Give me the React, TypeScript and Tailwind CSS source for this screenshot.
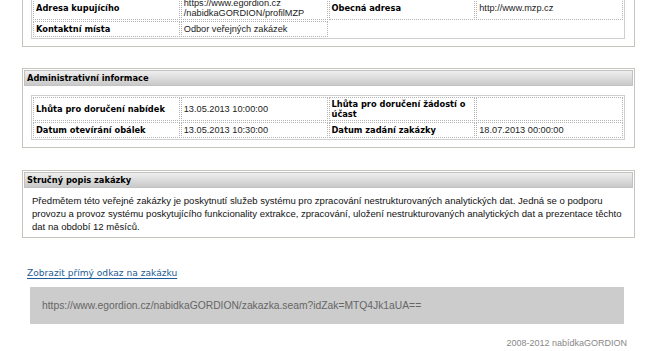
import React from "react";

const lbl = "font-['DejaVu_Sans_Condensed','DejaVu_Sans',sans-serif] font-bold text-[9.2px] text-black";
const val = "font-['Liberation_Sans',Arial,sans-serif] text-[9.2px] text-[#222]";
const td = "border border-dotted border-[#b4b4b4] px-[2px] py-[1px] h-[16px] leading-[10px] align-middle w-1/4";

function Header({ title }: { title: string }) {
  return (
    <div className="h-[16px] border border-[#c2c2c2] bg-gradient-to-b from-[#efefef] to-[#c9c9c9] pl-[2px] flex items-center">
      <span className={lbl + " leading-none"}>{title}</span>
    </div>
  );
}

export default function App() {
  return (
    <div className="w-[648px] h-[351px] overflow-hidden bg-white">
      <div className="ml-[22px] w-[613px]">
        {/* top panel (cut off) */}
        <div className="mt-[-15px] border border-[#c7c4bd] pt-[8px] pb-[7px]">
          <table className="ml-[8px] w-[594px] table-fixed border-separate border-spacing-[1px] border border-[#cfcfcf]">
            <tbody>
              <tr>
                <td className={td + " " + lbl}>Adresa kupujícího</td>
                <td className={td + " " + val}>
                  https://www.egordion.cz
                  <br />
                  /nabidkaGORDION/profilMZP
                </td>
                <td className={td + " " + lbl}>Obecná adresa</td>
                <td className={td + " " + val}>http://www.mzp.cz</td>
              </tr>
              <tr>
                <td className={td + " " + lbl}>Kontaktní místa</td>
                <td className={td + " " + val}>Odbor veřejných zakázek</td>
                <td className="w-1/4"></td>
                <td className="w-1/4"></td>
              </tr>
            </tbody>
          </table>
        </div>

        {/* administrativni informace */}
        <div className="mt-[21px] border border-[#c7c4bd] p-px pb-[7px]">
          <Header title="Administrativní informace" />
          <table className="mt-[9px] ml-[7px] w-[594px] table-fixed border-separate border-spacing-[1px] border border-[#cfcfcf]">
            <tbody>
              <tr>
                <td className={td + " " + lbl}>Lhůta pro doručení nabídek</td>
                <td className={td + " " + val}>13.05.2013 10:00:00</td>
                <td className={td + " " + lbl}>
                  Lhůta pro doručení žádostí o
                  <br />
                  účast
                </td>
                <td className={td + " " + val}></td>
              </tr>
              <tr>
                <td className={td + " " + lbl}>Datum otevírání obálek</td>
                <td className={td + " " + val}>13.05.2013 10:30:00</td>
                <td className={td + " " + lbl}>Datum zadání zakázky</td>
                <td className={td + " " + val}>18.07.2013 00:00:00</td>
              </tr>
            </tbody>
          </table>
        </div>

        {/* strucny popis */}
        <div className="mt-[22px] border border-[#c7c4bd] p-px pb-[4px]">
          <Header title="Stručný popis zakázky" />
          <p className="mt-[6px] pl-[8px] font-['Liberation_Sans',Arial,sans-serif] text-[9.55px] leading-[13px] text-[#111]">
            Předmětem této veřejné zakázky je poskytnutí služeb systému pro zpracování nestrukturovaných analytických dat. Jedná se o podporu
            <br />
            provozu a provoz systému poskytujícího funkcionality extrakce, zpracování, uložení nestrukturovaných analytických dat a prezentace těchto
            <br />
            dat na období 12 měsíců.
          </p>
        </div>

        {/* link */}
        <div className="mt-[26px] ml-[5px] leading-[12px]">
          <a
            href="#"
            className="font-['DejaVu_Sans',sans-serif] text-[9.1px] text-[#1d5a96] underline underline-offset-[2px]"
          >
            Zobrazit přímý odkaz na zakázku
          </a>
        </div>

        <div className="mt-[8px] ml-[8px] w-[594px] h-[37px] bg-[#cccccc] flex items-center pl-[12px]">
          <span className="font-['Liberation_Sans',Arial,sans-serif] text-[10.3px] text-[#666]">
            https://www.egordion.cz/nabidkaGORDION/zakazka.seam?idZak=MTQ4Jk1aUA==
          </span>
        </div>

        <div className="mt-[13px] w-[605px] text-right leading-[12px] font-['Liberation_Sans',Arial,sans-serif] text-[9px] text-[#888]">
          2008-2012 nabídkaGORDION
        </div>
      </div>
    </div>
  );
}
